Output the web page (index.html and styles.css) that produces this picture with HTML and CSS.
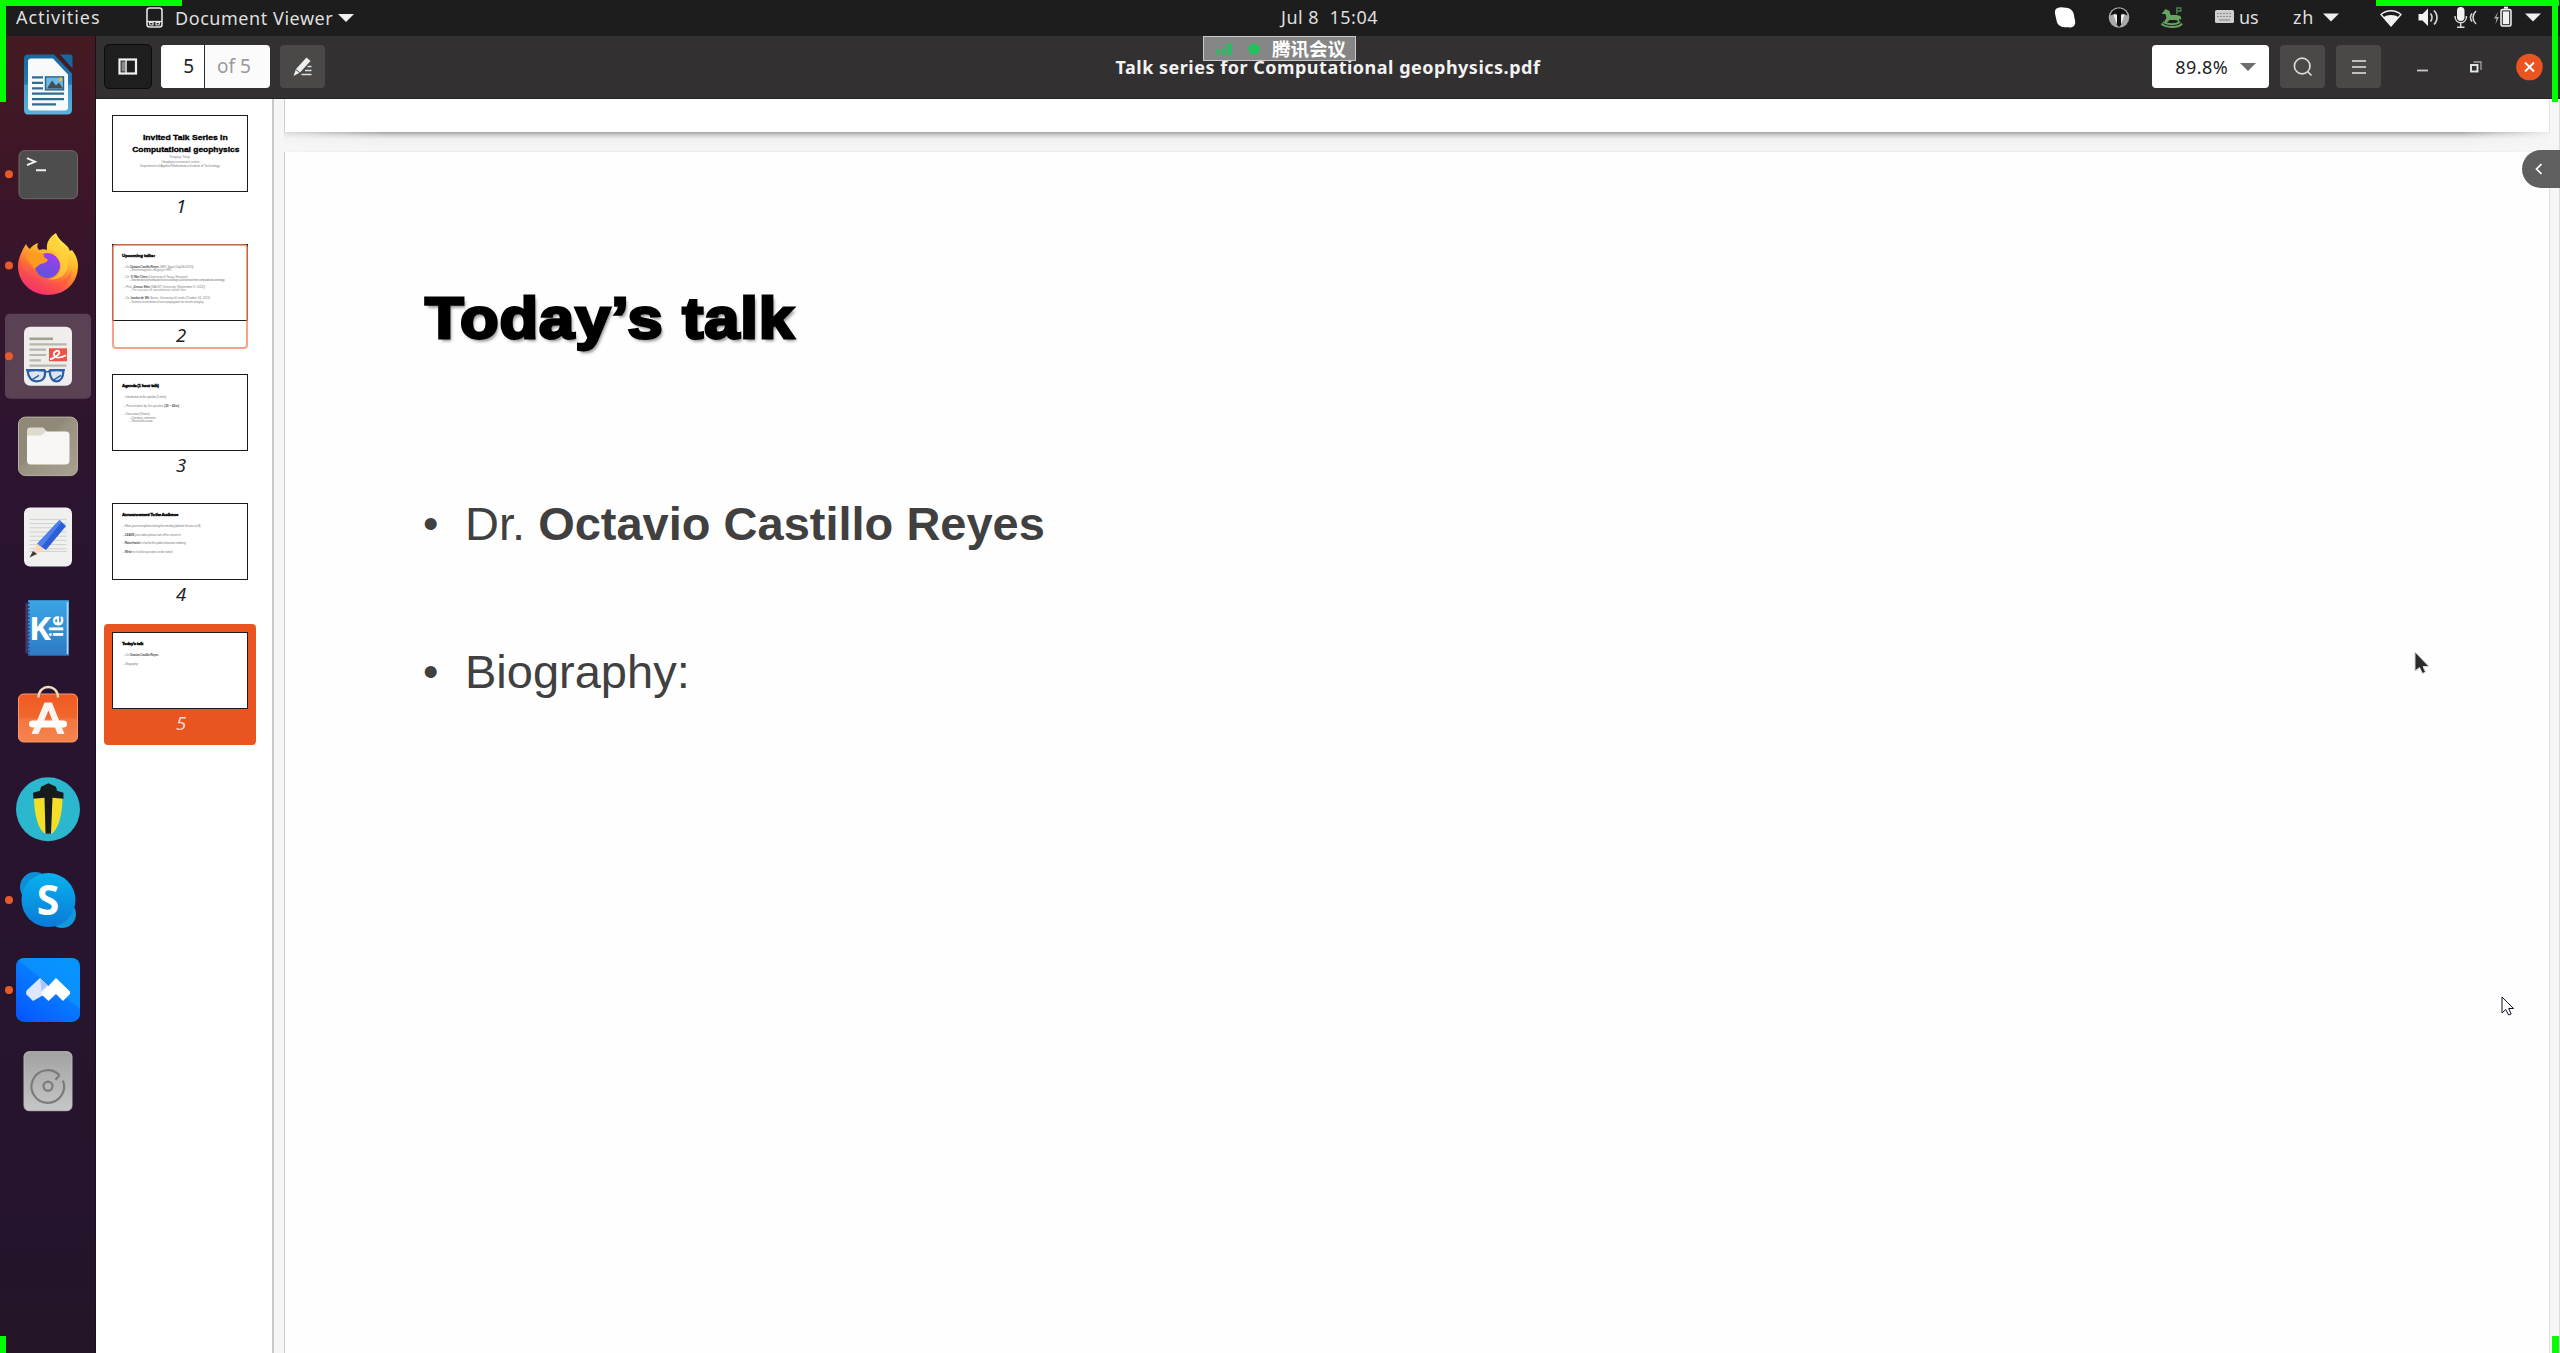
FILE: index.html
```html
<!DOCTYPE html>
<html lang="en">
<head>
<meta charset="utf-8">
<title>Talk series for Computational geophysics.pdf</title>
<link rel="stylesheet" href="styles.css">
</head>
<body>
<div class="desktop">
  <header class="topbar">
    <span class="activities">Activities</span>
    <div class="appmenu">
      <svg width="18" height="22" viewBox="0 0 18 22" fill="none" stroke="#e4e4e4" stroke-width="1.600"><rect x="1" y="1" width="15" height="19" rx="2.500"/><path d="M1 14.500h15" stroke-width="1.300"/><path d="M3.500 15.500h3.500v2.500H4zM10 15.500h3.500l-.5 2.500H10z" stroke-width="1.200"/></svg>
      <span class="appname">Document Viewer</span>
      <i class="caret"></i>
    </div>
    <span class="clock">Jul 8&nbsp; 15:04</span>
    <div class="tray">
      <svg width="500" height="36" viewBox="2050 0 500 36">
        <path d="M2057 8.200c3-1.500 6-.7 9-.5 5 .5 7.500 3.500 8 7.500.2 3 1.500 5 1.200 8-.4 3-3 4.300-5.500 4.200-3-.2-5 .3-8-.7-4-1.500-5-4.500-5.500-8-.6-3-1.500-5-1.200-7.500.2-1.500.8-2.500 2-3z" fill="#fff"/>
        <circle cx="2119" cy="17.500" r="10.300" fill="#a9a9a9"/><path d="M2110.500 15.500c1-4.500 4.500-7 8.500-7s7.500 2.500 8.500 7l-5-2-1 11-2.500 2.500-2.500-2.500-1-11z" fill="#111"/><path d="M2113.500 14.500h3.500v10.500zM2121 14.500h3.500l-3.500 10.500z" fill="#eee"/>
        <path d="M2161.500 14l4-5 4 2 1 4h6l4 1 1 3.500-2.500-.5.500 4-3-3h-7l-4 4-1-3 2-3-1-4z" fill="#66a365"/><path d="M2163 22c5 3 13 3 17 0M2161.500 23.500c3 4.500 18 4.500 20.500 0" fill="none" stroke="#66a365" stroke-width="2"/><path d="M2176.800 14V8h4v3h-4" fill="none" stroke="#4c814d" stroke-width="1.400"/>
        <rect x="2215" y="10" width="19" height="13" rx="1.500" fill="#cfcfcf"/><path d="M2217 13.500h15M2217 16.500h15" stroke="#8c8c8c" stroke-width="1.200" stroke-dasharray="2 1"/><path d="M2219 20h11" stroke="#8c8c8c" stroke-width="1.200"/>
        <path d="M2323 13.500h16l-8 8z" fill="#f0f0f0"/>
        <path d="M2381 14.500c5.500-5 14.500-5 20 0l-10 11.500z" fill="none" stroke="#f2f2f2" stroke-width="1.300"/><path d="M2383.500 17.200c4-3 11-3 15 0l-7.500 8.800z" fill="#f2f2f2"/>
        <path d="M2418.500 14h4l5.500-5.500v17.500l-5.500-5.500h-4z" fill="#f2f2f2"/><path d="M2430.500 13.500c2 2.500 2 5.500 0 8M2434 10.500c4 4 4 10 0 14" fill="none" stroke="#d9d9d9" stroke-width="1.600"/>
        <rect x="2457" y="7" width="7.500" height="14" rx="3.700" fill="#f2f2f2"/><path d="M2455 16c0 9 11.500 9 11.500 0M2460.700 23v4M2457 27.200h7.500M2472 13.500c-2 2.500-2 5.500 0 8M2476 11c-4 4-4 9 0 13" fill="none" stroke="#d9d9d9" stroke-width="1.500"/>
        <path d="M2498 12l-4 6.500h2.500l-1 5.500 3.500-7h-2.500z" fill="#a9a9a9"/><rect x="2501" y="9.500" width="10" height="16.500" rx="1.500" fill="#444" stroke="#f2f2f2" stroke-width="1.500"/><rect x="2503" y="11.500" width="6" height="12.500" fill="#f2f2f2"/><path d="M2504 7.700h4" stroke="#f2f2f2" stroke-width="2"/>
        <path d="M2525 13.500h16l-8 8z" fill="#f0f0f0"/>
      </svg>
      <span class="kb-us">us</span>
      <span class="kb-zh">zh</span>
    </div>
  </header>

  <div class="workspace">
    <nav class="dock">
      <svg viewBox="0 38.600 96 90.700">
        <defs><linearGradient id="wr" x1="0" y1="0" x2="0" y2="1"><stop offset="0" stop-color="#1668a0"/><stop offset=".49" stop-color="#1f7cb4"/><stop offset=".52" stop-color="#3f9fce"/><stop offset="1" stop-color="#58b4df"/></linearGradient></defs>
        <path d="M28 54h26l18 19v36q0 5-5 5H28q-4 0-4-5V58q0-4 4-4z" fill="url(#wr)"/><path d="M60 54h10q2.500 0 2.500 2.500V68z" fill="#1668a0"/>
        <path d="M31 58h22l15 16v33q0 3-3 3H31q-3 0-3-3V61q0-3 3-3z" fill="#f7f9fa"/>
        <path d="M32 77h11M32 82.500h11M32 88h11M32 93.300h32M32 98.700h32M32 104h24" stroke="#2f6d92" stroke-width="2.300"/>
        <rect x="45.500" y="76.500" width="18" height="13" fill="#6bb8e6" stroke="#2b6384" stroke-width="1.400"/><path d="M47 88l5-8 4 5 3-3 4 6z" fill="#434d54"/><circle cx="60.500" cy="79" r="1.900" fill="#e8bd32"/>
      </svg>
      <svg viewBox="0 129.300 96 90.700">
        <circle cx="9" cy="174.500" r="4" fill="#e95a2b"/>
        <rect x="19" y="151" width="58.500" height="48" rx="5.500" fill="#4d4d4d" stroke="#6e6a6c" stroke-width="1"/>
        <path d="M27 158.500l8 3.500-8 3.500M36 170.500h10" fill="none" stroke="#f0f0f0" stroke-width="2"/>
      </svg>
      <svg viewBox="0 220 96 90.700">
        <defs>
          <linearGradient id="ff1" x1=".8" y1=".1" x2=".35" y2="1"><stop offset="0" stop-color="#fff04d"/><stop offset=".35" stop-color="#ffb52d"/><stop offset=".65" stop-color="#ff6a38"/><stop offset="1" stop-color="#e9208a"/></linearGradient>
          <linearGradient id="ff2" x1=".7" y1="0" x2=".3" y2="1"><stop offset="0" stop-color="#a23cf0"/><stop offset="1" stop-color="#5a55d8"/></linearGradient>
        </defs>
        <circle cx="9" cy="265.500" r="4" fill="#e95a2b"/>
        <path d="M18 266c0-8 4-14 5-17l3-5c1 2 2 4 4 5 1-2 5-5 8-6-1 3-1 5 1 7 4-1 6-1 8 0-1-8 3-13 9-17 2 6 7 9 12 14l2 4 2-1c4 5 6 10 6 16 0 18-14 29-30 29S18 283 18 266z" fill="url(#ff1)"/>
        <path d="M20 258c2 12 8 22 22 26 14 2 26-4 30-14-1 14-13 24-26 24-16 0-27-12-28-28z" fill="#ff4b43" opacity=".45"/>
        <circle cx="47.500" cy="265.500" r="12.500" fill="url(#ff2)"/>
        <path d="M26 257c4-5 12-6 18-2-1 3 2 3 4 5-2 4-8 3-10 6l-4 3c-1-4-6-6-8-12z" fill="#ff9c20"/>
        <path d="M47 250c8-1 13 6 13 6s-4-1-6-1c3 2 7 6 7 11 0 7-6 13-14 13 16 3 25-10 20-24l-8-12-4-9c-5 3-8 9-8 16z" fill="#ffd23a" opacity=".75"/>
      </svg>
      <svg viewBox="0 310.700 96 90.700">
        <rect x="5" y="313.500" width="86" height="85" rx="5" fill="#5b4154"/>
        <circle cx="9" cy="356" r="4" fill="#e95a2b"/>
        <rect x="24" y="326.500" width="48" height="59" rx="6" fill="#efeeec"/>
        <path d="M29.500 338.500H53" stroke="#a59f8f" stroke-width="2.600"/><path d="M29.500 344H66.500M29.500 349.300H46M29.500 354.700H46M29.500 360H41M29.500 365.300H66.500" stroke="#b9b5ab" stroke-width="2.200"/>
        <rect x="49" y="348" width="18" height="13" fill="#ee5148"/><path d="M50 359c5-1 11-6 9-8s-6 1-5 4 7 3 12 0" fill="none" stroke="#fff" stroke-width="1.800"/>
        <path d="M27.500 370.500q9-1.500 17.500 0 1 10.500-8 10.500-8 0-9.500-10.500zM49.500 370.500q8-1.500 14 0-.5 10.500-7 10.500-6 0-7-10.500z" fill="#dfe5ec" stroke="#2a5fa8" stroke-width="2.200"/><path d="M45 371.500h5M26 369.500h19M49.500 369.500H65M31 380l8-5M53 380l8-5" stroke="#2a5fa8" stroke-width="1.500"/>
      </svg>
      <svg viewBox="0 401.400 96 90.700">
        <defs><linearGradient id="fl" x1="0" y1="0" x2="1" y2="1"><stop offset=".4" stop-color="#918977"/><stop offset=".5" stop-color="#9b9382"/><stop offset="1" stop-color="#a79f90"/></linearGradient></defs>
        <rect x="18.500" y="417.500" width="59" height="58.500" rx="7" fill="url(#fl)" stroke="#b7b0a4" stroke-width="1"/>
        <path d="M27 431q0-3 3-3h13l4 4v5H27z" fill="#dedbce"/><path d="M27 436h14l5-4h20q3.500 0 3.500 3.500V461q0 4-4 4H31q-4 0-4-4z" fill="#f8f7f5"/>
      </svg>
      <svg viewBox="0 492.100 96 90.700">
        <rect x="24" y="507.500" width="48" height="59" rx="6" fill="#f0f0ef"/>
        <path d="M29.500 519.500H66.500M29.500 523.700H66.500M29.500 527.900H66.500M29.500 532.100H66.500M29.500 536.300H66.500M29.500 540.500H66.500M29.500 544.700H66.500M29.500 548.900H66.500M29.500 551.500H66.500" stroke="#d0d0d2" stroke-width="1"/>
        <path d="M59.500 520l6.500 6-20 24-9-6z" fill="#2c5fd6"/><path d="M59.500 520l2 2-20 25-4.500-3z" fill="#4d80ec"/><path d="M37 543.500l7.500 6.500-13 6z" fill="#fbd9b8"/><path d="M33 551l4 3-7.500 3.500z" fill="#3b3b3b"/>
      </svg>
      <svg viewBox="0 582.800 96 90.700">
        <defs><linearGradient id="kl" x1="0" y1="0" x2="0" y2="1"><stop offset="0" stop-color="#3aa6e6"/><stop offset="1" stop-color="#2f79c2"/></linearGradient></defs>
        <rect x="25.500" y="603" width="6" height="50" fill="#4b3768"/><rect x="28" y="600" width="41" height="55.500" fill="url(#kl)"/>
        <path d="M28.500 602V655" stroke="#1c4778" stroke-width="2" stroke-dasharray="2 1.700"/><path d="M67.500 602V654" stroke="#a9dcf5" stroke-width="1.600"/>
        <text x="29" y="639.500" class="kile" font-size="32.500" textLength="22" lengthAdjust="spacingAndGlyphs">K</text>
        <text transform="translate(63 637) rotate(-90)" class="kile" font-size="18.500" textLength="22">ile</text>
      </svg>
      <svg viewBox="0 673.500 96 90.700">
        <defs><linearGradient id="sw" x1="0" y1="0" x2="0" y2="1"><stop offset="0" stop-color="#ef5a22"/><stop offset=".5" stop-color="#f1672f"/><stop offset=".52" stop-color="#f47640"/><stop offset="1" stop-color="#f58450"/></linearGradient></defs>
        <rect x="18.500" y="694.500" width="59" height="48" rx="5" fill="url(#sw)" stroke="#f79a6c" stroke-width="1"/>
        <path d="M38.500 698c0-14 19.500-14 19.500 0" fill="none" stroke="#f3dcba" stroke-width="2.400"/>
        <path d="M44.500 703h7.500l12.500 31.500h-7L48.500 711 38.500 734.500h-7z" fill="#fbf3ee"/><rect x="29" y="721" width="38" height="7" rx="3.500" fill="#fff"/>
      </svg>
      <svg viewBox="0 764.200 96 90.700">
        <circle cx="48" cy="809.500" r="32" fill="#2bb8cf"/>
        <path d="M34 797h28.500c0 14-3 32-11 37h-6.500c-8-5-11-23-11-37z" fill="#f3df27"/>
        <path d="M33 793l7-2 1-4 7.500-3.500L56 787l1 4 6.500 2v6l-11-1-1.500 36h-5.500l-1-36-11 1z" fill="#191a1b"/>
      </svg>
      <svg viewBox="0 854.900 96 90.700">
        <defs><linearGradient id="sk" x1="0" y1="0" x2="0" y2="1"><stop offset="0" stop-color="#08b2ee"/><stop offset="1" stop-color="#0a7ad8"/></linearGradient></defs>
        <circle cx="9" cy="900" r="4" fill="#e95a2b"/>
        <circle cx="35" cy="887" r="15" fill="#0d8fd8"/><circle cx="62" cy="914" r="14" fill="#1398dc"/><circle cx="48.500" cy="900" r="27" fill="url(#sk)"/>
        <text x="48" y="914.500" class="skype" text-anchor="middle" font-size="41">S</text>
      </svg>
      <svg viewBox="0 945.600 96 90.700">
        <defs><linearGradient id="tm" x1=".1" y1="1" x2=".8" y2=".1"><stop offset="0" stop-color="#0657ff"/><stop offset=".62" stop-color="#087bff"/><stop offset=".64" stop-color="#0a8eff"/><stop offset="1" stop-color="#0794ff"/></linearGradient></defs>
        <circle cx="9" cy="990.500" r="4" fill="#e95a2b"/>
        <rect x="16" y="958.500" width="64" height="64" rx="8" fill="url(#tm)"/>
        <path d="M27 990.500L40 978.500 48 986v7L33 1001.500 26.500 995q-1.500-2.300.5-4.500z" fill="#dbe7ff"/><path d="M40 978.500l7.500 7-6 6z" fill="#a9c4ff"/>
        <path d="M42 993L56 978.500 69.500 991.500q1.500 2 0 3.500L63 1001.500 56 994.500 48.500 1001.500 41.500 995z" fill="#fff"/>
      </svg>
      <svg viewBox="0 1036.300 96 90.700">
        <defs><linearGradient id="dk" x1="0" y1="0" x2="0" y2="1"><stop offset="0" stop-color="#a2a2a2"/><stop offset="1" stop-color="#c6c6c6"/></linearGradient></defs>
        <rect x="24" y="1052" width="48" height="59" rx="5" fill="url(#dk)" stroke="#bcbcbc" stroke-width="1"/>
        <path d="M59.500 1075.500A16.300 16.300 0 1 0 63 1081M59.500 1075.500l-4 4.500M63 1081l0 1.500" fill="none" stroke="#7b7b7b" stroke-width="2.200"/><circle cx="48" cy="1086.500" r="4.500" fill="none" stroke="#7b7b7b" stroke-width="2.200"/>
      </svg>
    </nav>

    <main class="window">
      <div class="toolbar">
        <div class="tb-left">
          <button class="btn active"><svg width="20" height="18" viewBox="0 0 20 18"><rect x="1.500" y="1.500" width="16.500" height="14" fill="none" stroke="#f2f2f2" stroke-width="2.200"/><rect x="3.500" y="3.500" width="3.500" height="10" fill="#888"/><path d="M8 2v13" stroke="#f2f2f2" stroke-width="1.500"/></svg></button>
          <div class="pagebox"><span class="cur">5</span><span class="total">of 5</span></div>
          <button class="btn pen"><svg width="22" height="22" viewBox="0 0 22 22"><path d="M1.500 20l2.500-7L14.500 1.500l4 3.500L8 16.500z" fill="#f0f0f0"/><path d="M3.800 13.500l4 3.200" stroke="#4a4948" stroke-width="1"/><path d="M15.500 10.500h4M13 14.500h6.500M9.500 18.500h10" stroke="#dedede" stroke-width="1.500"/></svg></button>
        </div>
        <h1 class="doc-title">Talk series for Computational geophysics.pdf</h1>
        <div class="tb-right">
          <div class="zoom"><span>89.8%</span><i class="caret dark"></i></div>
          <button class="btn"><svg width="20" height="20" viewBox="0 0 20 20" fill="none" stroke="#dadada" stroke-width="1.700"><circle cx="9.200" cy="9" r="7.800"/><path d="M14.500 14.500l4 4"/></svg></button>
          <button class="btn"><svg width="16" height="16" viewBox="0 0 16 16" stroke="#e6e6e6" stroke-width="1.700"><path d="M1 2h14M1 8h14M1 14h14"/></svg></button>
          <svg class="wm" width="160" height="44" viewBox="2396 45 160 44"><path d="M2417 70.500h11" stroke="#c9c9c9" stroke-width="1.800"/><rect x="2471" y="65" width="6.500" height="6.500" fill="none" stroke="#e9e9e9" stroke-width="1.900"/><path d="M2473.500 62h7.500v8" fill="none" stroke="#a5a5a5" stroke-width="1.300"/><circle cx="2529.500" cy="67" r="13.300" fill="#e95420"/><path d="M2525 62.500l9 9M2534 62.500l-9 9" stroke="#fff" stroke-width="1.900"/></svg>
        </div>
      </div>

      <div class="content">
        <aside class="thumbs">
          <figure class="thumb">
            <svg viewBox="0 0 136 77" class="slide-mini"><g class="hd"><text x="30" y="24.500" font-size="8" textLength="87" lengthAdjust="spacingAndGlyphs">Invited Talk Series in</text><text x="19" y="36.700" font-size="8" textLength="110" lengthAdjust="spacingAndGlyphs">Computational geophysics</text></g>
            <text x="57" y="43" font-size="3.500" textLength="21">Tongtay Tong</text><text x="49" y="48" font-size="3.500" textLength="39">Geophysics research centre</text><text x="27" y="52.300" font-size="3.500" textLength="82">Department of Applied Mathematics Institute of Technology</text></svg>
            <figcaption>1</figcaption>
          </figure>
          <figure class="thumb current">
            <svg viewBox="0 0 136 77" class="slide-mini"><g class="hd"><text x="8.500" y="12" font-size="4.500" textLength="34">Upcoming talks:</text></g>
            <g font-size="3.300"><text x="10" y="24" textLength="72">– Dr. <tspan class="b">Octavio Castillo Reyes</tspan>, (BSC Spain (July 8th 2021))</text><text x="16" y="27.200" font-size="3" textLength="44">– Electromagnetic imaging in HPC</text>
            <text x="10" y="33.500" textLength="66">– Dr. <tspan class="b">Yi Wei Chen</tspan> (University of Texas, Houston)</text><text x="16" y="37.300" font-size="3" textLength="98">– New directions for earthquake source and large-scale inversion from computational seismology</text>
            <text x="10" y="44" textLength="84">– Prof. <tspan class="b">Jinsoo Shin</tspan> (KAUST University, (September 9, 2021))</text><text x="16" y="47" font-size="3" textLength="58">– The success of convolutional neural nets</text>
            <text x="10" y="55" textLength="89">– Dr. <tspan class="b">Ivanka de Wit</tspan> Series, University of Leeds (October 14, 2021)</text><text x="16" y="59.300" font-size="3" textLength="76">– Numerical simulation of wave propagation for seismic imaging</text></g></svg>
            <figcaption>2</figcaption>
          </figure>
          <figure class="thumb">
            <svg viewBox="0 0 136 77" class="slide-mini"><g class="hd"><text x="8.500" y="12" font-size="4.500" textLength="38">Agenda (1 hour talk)</text></g>
            <g font-size="3.300"><text x="10" y="24" textLength="44">– Introduction to the speaker (5 mins)</text><text x="10" y="33" textLength="57">– Presentation by the speaker <tspan class="b">(30 – 45m)</tspan></text><text x="10" y="41.300" textLength="27">– Discussion (15mins)</text><text x="16" y="45.300" font-size="3" textLength="27">– Questions, comments</text><text x="16" y="48" font-size="3" textLength="24">– General discussion</text></g></svg>
            <figcaption>3</figcaption>
          </figure>
          <figure class="thumb">
            <svg viewBox="0 0 136 77" class="slide-mini"><g class="hd"><text x="8.500" y="12.300" font-size="4.500" textLength="58">Announcement To the Audience</text></g>
            <g font-size="3.300"><text x="9" y="24" textLength="80">– Mute your microphone during the meeting (default: the mic is off)</text><text x="9" y="33" textLength="60">– <tspan class="b">LEAVE</tspan> your video please turn off to connect it</text><text x="9" y="41.300" textLength="65">– <tspan class="b">Raise hand</tspan> in chat for the public interaction ordering</text><text x="9" y="50.300" textLength="51">– <tspan class="b">Write</tspan> in chat for questions to be noted</text></g></svg>
            <figcaption>4</figcaption>
          </figure>
          <figure class="thumb selected">
            <svg viewBox="0 0 136 77" class="slide-mini"><g class="hd"><text x="8.500" y="12.300" font-size="4.500" textLength="22">Today’s talk</text></g>
            <g font-size="3.300"><text x="10" y="24" textLength="36">– Dr. <tspan class="b">Octavio Castillo Reyes</tspan></text><text x="10" y="33.300" textLength="15">– Biography:</text></g></svg>
            <figcaption>5</figcaption>
          </figure>
        </aside>

        <section class="viewer">
          <div class="page-prev"></div>
          <div class="page-edge"></div>
          <article class="page">
            <h2>Today’s talk</h2>
            <ul>
              <li>Dr. <b>Octavio Castillo Reyes</b></li>
              <li>Biography:</li>
            </ul>
          </article>
        </section>
      </div>
    </main>
  </div>

  <div class="meeting"><svg width="44" height="14" viewBox="0 0 44 14" fill="#1dc35c"><path d="M0 7h3v6H0zM5.500 5h3.500v8H5.500zM11 1h5v12h-5z" opacity=".85"/><circle cx="38" cy="7" r="5.500"/></svg><span>腾讯会议</span></div>
  <div class="side-tab"><svg width="8" height="12" viewBox="0 0 8 12" fill="none" stroke="#fff" stroke-width="1.700"><path d="M6.500 1l-5 5 5 5"/></svg></div>
  <i class="share tl-h"></i><i class="share tl-v"></i><i class="share tr-h"></i><i class="share tr-v"></i><i class="share bl"></i><i class="share br"></i>
  <svg class="cursor remote" width="22" height="28" viewBox="0 0 22 28"><path d="M4 2v19l4.500-3.500 3 6 3-1.500-2.500-5.500h6z" fill="#2b2b2b" stroke="#d4d4d4" stroke-width="1"/></svg>
  <svg class="cursor local" width="14" height="21" viewBox="0 0 14 21"><path d="M1 1v16l3.700-3.500 3 5.500 2.500-1-2.500-5.500h4.800z" fill="#fff" stroke="#14101f" stroke-width="1"/></svg>
</div>
</body>
</html>
```
FILE: styles.css
```css
*, *::before, *::after { box-sizing: border-box; }
body { margin: 0; font-family: "Noto Sans", "Open Sans", "Noto Sans CJK SC", sans-serif; }
svg { display: block; flex: none; }
.desktop { position: relative; width: 2560px; height: 1353px; overflow: hidden; display: flex; flex-direction: column; background: #f6f6f6; }

.topbar { height: 36px; flex: none; background: #1d1d1d; color: #dfdfdf; font-size: 18px; display: grid; grid-template-columns: 146px 1fr 102px 1180px; line-height: 35px; white-space: nowrap; }
.activities { padding-left: 16px; letter-spacing: .95px; }
.appmenu { display: flex; align-items: center; }
.appname { margin-left: 11px; letter-spacing: .55px; }
.caret { width: 0; border: 8px solid transparent; border-top-color: #f0f0f0; border-bottom: 0; margin-left: 7px; }
.appmenu .caret { margin-left: 5px; }
.caret.dark { border-top-color: #6d6d6d; }
.clock { text-align: center; letter-spacing: .5px; margin-left: 1px; }
.tray { position: relative; justify-self: end; margin-right: 10px; }
.kb-us, .kb-zh { position: absolute; top: 0; }
.kb-us { left: 189px; }
.kb-zh { left: 243px; letter-spacing: .8px; }

.workspace { flex: 1; display: flex; min-height: 0; }
.dock { width: 96px; flex: none; padding-top: 2.600px; border-right: 1px solid #1c1020; background: linear-gradient(#451b22 0, #3c1528 150px, #30152e 330px, #2a1430 500px, #27142d 1000px, #24142c 1200px, #241527 1317px); }
.dock svg { width: 96px; height: 90.700px; }
.kile { font-family: "Open Sans", sans-serif; font-weight: 700; fill: #fff; }
.skype { font-family: "Noto Sans", sans-serif; font-weight: 700; fill: #fff; }

.window { flex: 1; display: flex; flex-direction: column; min-width: 0; }
.toolbar { height: 63px; flex: none; background: #323031; border-bottom: 1px solid #222; display: flex; align-items: center; padding: 0 0 1px 8px; }
.tb-left, .tb-right { display: flex; align-items: center; height: 44px; }
.tb-left { flex: 1; }
.tb-right { gap: 11px; flex: none; width: 408px; margin-left: 611px; }
.btn { width: 45px; height: 43px; padding: 0; border: 0; border-radius: 4px; background: #4a4948; display: flex; align-items: center; justify-content: center; flex: none; }
.btn.active { width: 48px; height: 45px; background: #1e1e1e; border: 1px solid #0c0c0c; border-radius: 5px; }
.pagebox { margin: 0 10px 0 9px; width: 109px; height: 43px; border-radius: 4px; overflow: hidden; background: #fbfbfb; display: flex; font-size: 19px; line-height: 43px; }
.cur { width: 44px; border-right: 1px solid #2b2b2b; background: #fff; color: #222; padding-right: 10px; text-align: right; }
.total { padding-left: 12px; color: #9a9a9a; }
.doc-title { margin: 0; width: 426px; flex: none; color: #f2f2f2; font-size: 18px; font-weight: 700; letter-spacing: .5px; white-space: nowrap; text-align: center; line-height: 24px; }
.zoom { width: 117px; height: 43px; border-radius: 4px; background: #fff; color: #222; display: flex; align-items: center; justify-content: flex-end; padding-right: 13px; font-size: 18px; letter-spacing: .4px; flex: none; }
.zoom .caret { margin-left: 12px; }
.wm { margin-left: 4px; margin-right: 4px; }

.content { flex: 1; display: flex; min-height: 0; }
.thumbs { width: 176px; flex: none; background: #fff; padding: 8px 0 0 8px; display: flex; flex-direction: column; gap: 8.300px; }
.thumb { margin: 0; width: 152px; height: 121px; padding: 8px 8px 0; border-radius: 4px; position: relative; flex: none; }
.slide-mini { width: 136px; height: 77px; background: #fff; border: 1.500px solid #1b1b1b; font-family: "Liberation Sans", Arial, sans-serif; fill: #858585; }
.slide-mini .hd { font-weight: 700; fill: #000; stroke: #000; stroke-width: .35px; }
.slide-mini .b { font-weight: 700; fill: #555; }
figcaption { text-align: center; font-style: italic; font-size: 18.500px; line-height: 28px; color: #222; padding-left: 2px; }
.selected { background: #e95420; }
.selected figcaption { color: #f9dcd0; }
.current::after { content: ""; position: absolute; left: 8px; top: 8px; width: 136px; height: 105px; border: 2px solid #f0845f; opacity: .75; border-radius: 4px; }

.viewer { flex: 1; border-left: 2px solid #c9c9c9; background: #f6f6f6; padding: 0 9px 0 10px; display: flex; flex-direction: column; border-right: 1px solid #dcdcdc; }
.page-prev { height: 33px; flex: none; background: #fff; border-left: 1px solid #cfcfcf; border-right: 1px solid #e4e4e4; }
.page-edge { height: 20px; flex: none; background: linear-gradient(90deg, rgba(246, 246, 246, .7), transparent 100px calc(100% - 90px), rgba(246, 246, 246, .9)), linear-gradient(#9fa3a0, #cfcfcf 3px, #f0f0f0 7px, #f6f6f6 18px, #e9e9e9); }
.page { flex: 1; background: #fefefe; border-left: 1px solid #cccccc; border-right: 1px solid #dedede; padding: 131px 0 0 140px; font-family: "Liberation Sans", Arial, sans-serif; }
.page h2 { margin: 0; width: max-content; font-size: 57px; line-height: 70px; font-weight: 700; letter-spacing: .9px; color: #000; -webkit-text-stroke: 2.800px #000; text-shadow: 2px 3px 3px rgba(0, 0, 0, .45); white-space: nowrap; transform: scaleX(1.108); transform-origin: 0 50%; }
.page ul { list-style: none; margin: 136px 0 0; padding: 0; font-size: 47px; color: #404040; }
.page li { height: 148px; line-height: 70px; display: flex; white-space: pre; }
.page li::before { content: "•"; width: 42px; margin-left: -2px; font-size: 44px; }

.meeting { position: absolute; left: 1203px; top: 36px; width: 153px; height: 25px; border: 1px solid #c9c9c9; background: #868686; display: flex; align-items: center; padding-left: 12px; color: #fff; font: 700 18.500px/23px "Noto Sans CJK SC", sans-serif; }
.meeting span { margin-left: 12px; }
.side-tab { position: absolute; right: 0; top: 150px; width: 38px; height: 38px; border-radius: 19px 0 0 19px; background: #5f5f5f; display: flex; align-items: center; padding-left: 13px; }
.share { position: absolute; background: #00ff00; }
.tl-h { left: 0; top: 0; width: 182px; height: 6px; }
.tl-v { left: 0; top: 0; width: 6px; height: 102px; }
.tr-h { left: 2376px; top: 0; width: 183px; height: 6px; }
.tr-v { left: 2552px; top: 0; width: 6px; height: 102px; }
.bl { left: 0; top: 1336px; width: 6px; height: 17px; }
.br { left: 2552px; top: 1336px; width: 7px; height: 17px; }
.cursor { position: absolute; }
.remote { left: 2411px; top: 650px; }
.local { left: 2501px; top: 996px; }
```
